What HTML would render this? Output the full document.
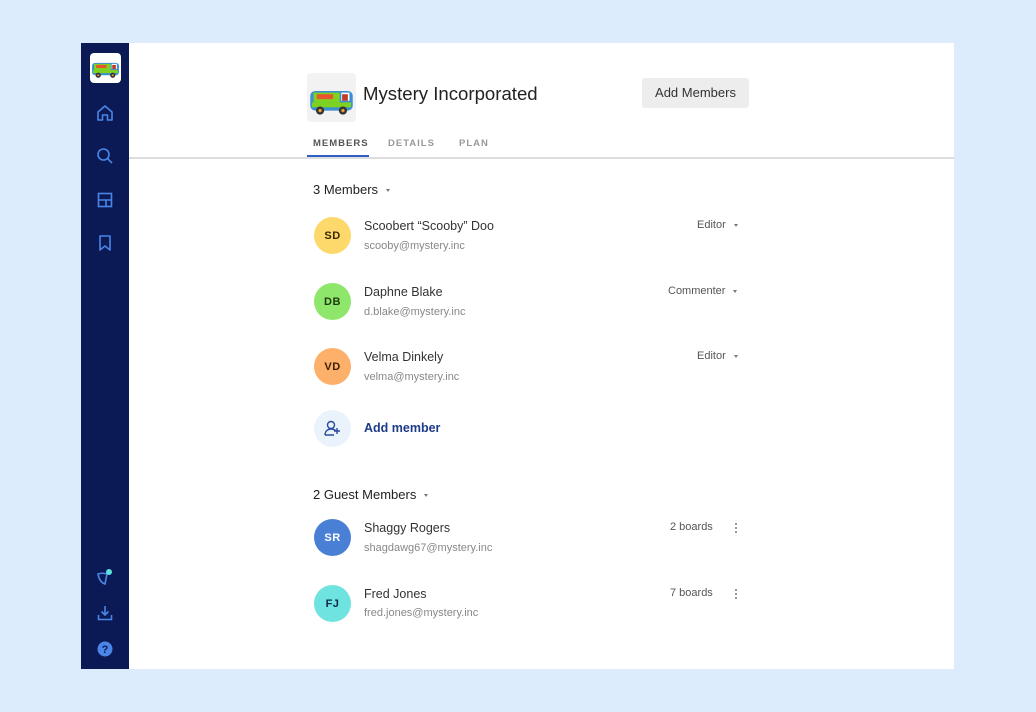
<!DOCTYPE html><html><head><style>
body{margin:0;width:1036px;height:712px;background:#ddecfc;font-family:"Liberation Sans",sans-serif;position:relative;overflow:hidden}
.side{position:absolute;left:81px;top:43px;width:48px;height:626px;background:#0b1a55}
.main{position:absolute;left:129px;top:43px;width:825px;height:626px;background:#fff}
.a{position:absolute}
.ic{position:absolute;left:14px}
.av{position:absolute;left:314px;width:37px;height:37px;border-radius:50%;font-size:11px;font-weight:bold;text-align:center;line-height:39px;letter-spacing:.5px}
.nm{position:absolute;left:364px;font-size:12.5px;color:#333}
.em{position:absolute;left:364px;font-size:11px;color:#888}
.rl{position:absolute;font-size:11px;color:#555}
.car{display:inline-block;width:0;height:0;border-left:2.5px solid transparent;border-right:2.5px solid transparent;border-top:3px solid #777;margin-left:8px;vertical-align:middle}
.dots{position:absolute;left:735px;width:2px}
.dots i{display:block;width:2px;height:2px;background:#777;border-radius:1px;margin-bottom:2px}
</style></head><body>
<svg width="0" height="0" style="position:absolute"><defs><g id="van"><rect x="1" y="6" width="26" height="12" rx="3" fill="#3a8fd0"/><rect x="3" y="7" width="16" height="6" fill="#7ed321"/><rect x="5" y="8" width="10" height="3" fill="#e8542e"/><rect x="20" y="7" width="5" height="5" fill="#fff"/><rect x="20.5" y="8" width="3.5" height="4" fill="#c0392b"/><rect x="2" y="13" width="24" height="3" fill="#7ed321"/><circle cx="7" cy="18" r="2.5" fill="#333"/><circle cx="7" cy="18" r="1" fill="#e8a030"/><circle cx="21" cy="18" r="2.5" fill="#333"/><circle cx="21" cy="18" r="1" fill="#e8a030"/></g></defs></svg>
<div class="side">
<div class="a" style="left:9px;top:10px;width:31px;height:30px;background:#fff;border-radius:4px"><svg width="31" height="30" viewBox="-1 -2 30 26"><use href="#van"/></svg></div>
<svg class="ic" style="top:60px" width="20" height="20" viewBox="0 0 20 20" fill="none" stroke="#4a86e8" stroke-width="1.6"><path d="M3 9L10 3l7 6v8h-4.5v-5h-5v5H3z" stroke-linejoin="round"/></svg>
<svg class="ic" style="top:103px" width="20" height="20" viewBox="0 0 20 20" fill="none" stroke="#4a86e8" stroke-width="1.6"><circle cx="8.5" cy="8.5" r="5.5"/><path d="M12.5 12.5L17 17"/></svg>
<svg class="ic" style="top:147px" width="20" height="20" viewBox="0 0 20 20" fill="none" stroke="#4a86e8" stroke-width="1.6"><rect x="3.5" y="3.5" width="13" height="13"/><path d="M3.5 10h13M11 10v6.5"/></svg>
<svg class="ic" style="top:190px" width="20" height="20" viewBox="0 0 20 20" fill="none" stroke="#4a86e8" stroke-width="1.6"><path d="M5 3h10v14l-5-4-5 4z" stroke-linejoin="round"/></svg>
<svg class="ic" style="top:524px" width="20" height="20" viewBox="0 0 20 20" fill="none" stroke="#4a86e8" stroke-width="1.6"><path d="M3 7c3-1 6-1 9 0l-2 10c-3-1-6-4-7-10z"/><circle cx="14" cy="5" r="3" fill="#5ee0e0" stroke="none"/></svg>
<svg class="ic" style="top:560px" width="20" height="20" viewBox="0 0 20 20" fill="none" stroke="#4a86e8" stroke-width="1.6"><path d="M10 3v9M6.5 8.5L10 12l3.5-3.5M3.5 12v4.5h13V12"/></svg>
<svg class="ic" style="top:596px" width="20" height="20" viewBox="0 0 20 20"><circle cx="10" cy="10" r="7.5" fill="#4a86e8"/><text x="10" y="14" text-anchor="middle" font-size="11" font-weight="bold" fill="#0b1a55" font-family="Liberation Sans">?</text></svg>
</div>
<div class="main"></div>
<div class="a" style="left:307px;top:73px;width:49px;height:49px;background:#f2f2f2;border-radius:4px"><svg width="49" height="49" viewBox="-1 -4 30 28"><use href="#van"/></svg></div>
<div class="a" style="left:363px;top:83px;font-size:18.6px;color:#222">Mystery Incorporated</div>
<div class="a" style="left:642px;top:78px;width:107px;height:30px;background:#ededed;border-radius:3px;font-size:13px;color:#333;text-align:center;line-height:30px">Add Members</div>
<div class="a" style="left:313px;top:138px;font-size:9.5px;font-weight:bold;letter-spacing:1px;color:#555">MEMBERS</div>
<div class="a" style="left:388px;top:138px;font-size:9.5px;font-weight:bold;letter-spacing:1px;color:#999">DETAILS</div>
<div class="a" style="left:459px;top:138px;font-size:9.5px;font-weight:bold;letter-spacing:1px;color:#999">PLAN</div>
<div class="a" style="left:129px;top:157px;width:825px;height:2px;background:#ddd"></div>
<div class="a" style="left:307px;top:155px;width:62px;height:2px;background:#2f5fc4"></div>
<div class="a" style="left:313px;top:182px;font-size:13px;color:#222">3 Members<span class="car"></span></div>
<div class="av" style="top:217px;background:#fdd86b;color:#3a2a00">SD</div>
<div class="nm" style="top:219px">Scoobert “Scooby” Doo</div><div class="em" style="top:240px">scooby@mystery.inc</div>
<div class="rl" style="left:697px;top:219px">Editor<span class="car"></span></div>
<div class="av" style="top:283px;background:#8ee76a;color:#1d3a10">DB</div>
<div class="nm" style="top:285px">Daphne Blake</div><div class="em" style="top:306px">d.blake@mystery.inc</div>
<div class="rl" style="left:668px;top:285px">Commenter<span class="car"></span></div>
<div class="av" style="top:348px;background:#fdb06a;color:#3a2000">VD</div>
<div class="nm" style="top:350px">Velma Dinkely</div><div class="em" style="top:371px">velma@mystery.inc</div>
<div class="rl" style="left:697px;top:350px">Editor<span class="car"></span></div>
<div class="av" style="top:410px;background:#eaf3fc"><svg width="37" height="37" viewBox="0 0 37 37" fill="none" stroke="#2a4aa0" stroke-width="1.4"><circle cx="17" cy="15" r="3.5"/><path d="M11 25c0-4 3-6 6-6s4 1 5 2M11 25h9M23 18v6M20 21h6"/></svg></div>
<div class="a" style="left:364px;top:421px;font-size:12.5px;font-weight:bold;color:#1e3a8a">Add member</div>
<div class="a" style="left:313px;top:487px;font-size:13px;color:#222">2 Guest Members<span class="car"></span></div>
<div class="av" style="top:519px;background:#4a7fd6;color:#fff">SR</div>
<div class="nm" style="top:521px">Shaggy Rogers</div><div class="em" style="top:542px">shagdawg67@mystery.inc</div>
<div class="rl" style="left:670px;top:521px">2 boards</div>
<div class="dots" style="top:523px"><i></i><i></i><i></i></div>
<div class="av" style="top:585px;background:#6ee3e0;color:#0e2a4a">FJ</div>
<div class="nm" style="top:587px">Fred Jones</div><div class="em" style="top:607px">fred.jones@mystery.inc</div>
<div class="rl" style="left:670px;top:587px">7 boards</div>
<div class="dots" style="top:589px"><i></i><i></i><i></i></div>
</body></html>
